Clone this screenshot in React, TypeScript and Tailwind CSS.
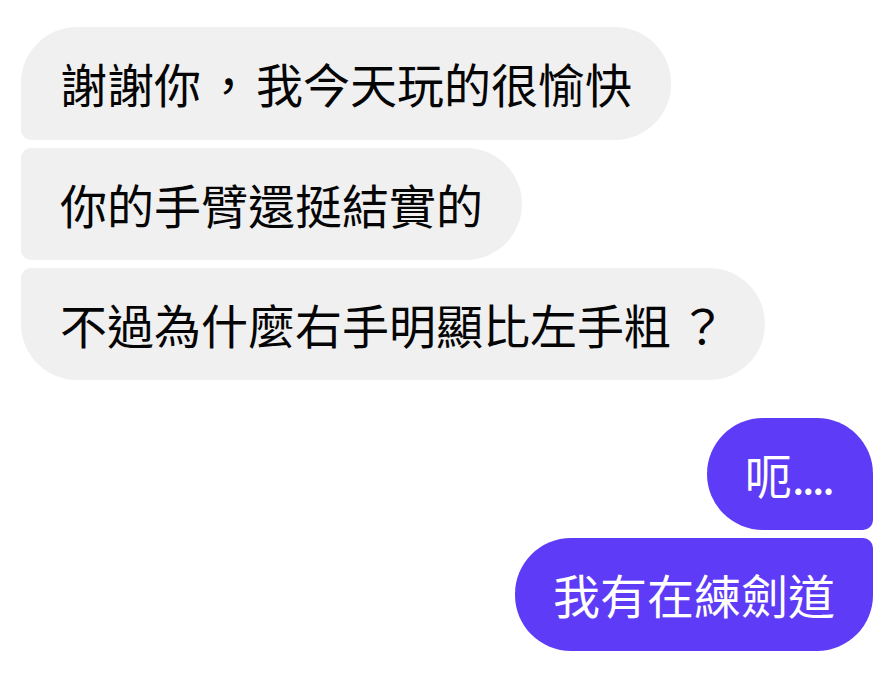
const font = { fontFamily: '"Noto Sans CJK TC", "Noto Sans", sans-serif' }

export default function App() {
  return (
    <div className="w-[880px] h-[690px] bg-white overflow-hidden" style={font}>
      <div className="flex flex-col pt-[27px] pl-[21px] pr-[7px]">
        {/* incoming */}
        <div className="flex flex-col items-start gap-[8px]">
          <div className="h-[113px] flex items-center px-[39px] bg-[#f0f0f0] text-[#050505] text-[47px] rounded-r-[56px] rounded-tl-[56px] rounded-bl-[10px]">
            謝謝你<span className="mx-[4px]">，</span>我今天玩的很愉快
          </div>
          <div className="h-[112px] flex items-center px-[39px] bg-[#f0f0f0] text-[#050505] text-[47px] rounded-r-[56px] rounded-l-[10px]">
            你的手臂還挺結實的
          </div>
          <div className="h-[112px] flex items-center px-[39px] bg-[#f0f0f0] text-[#050505] text-[47px] rounded-r-[56px] rounded-bl-[56px] rounded-tl-[10px]">
            不過為什麼右手明顯比左手粗<span className="ml-[8px]">？</span>
          </div>
        </div>

        {/* outgoing */}
        <div className="flex flex-col items-end gap-[8px] mt-[38px]">
          <div className="h-[112px] flex items-center px-[38px] bg-[#5e3bf6] text-white text-[47px] rounded-l-[56px] rounded-tr-[56px] rounded-br-[10px]">
            呃<span className="tracking-[-3px] mr-[3px]">....</span>
          </div>
          <div className="h-[113px] flex items-center px-[38px] bg-[#5e3bf6] text-white text-[47px] rounded-l-[56px] rounded-br-[56px] rounded-tr-[10px]">
            我有在練劍道
          </div>
        </div>
      </div>
    </div>
  )
}
